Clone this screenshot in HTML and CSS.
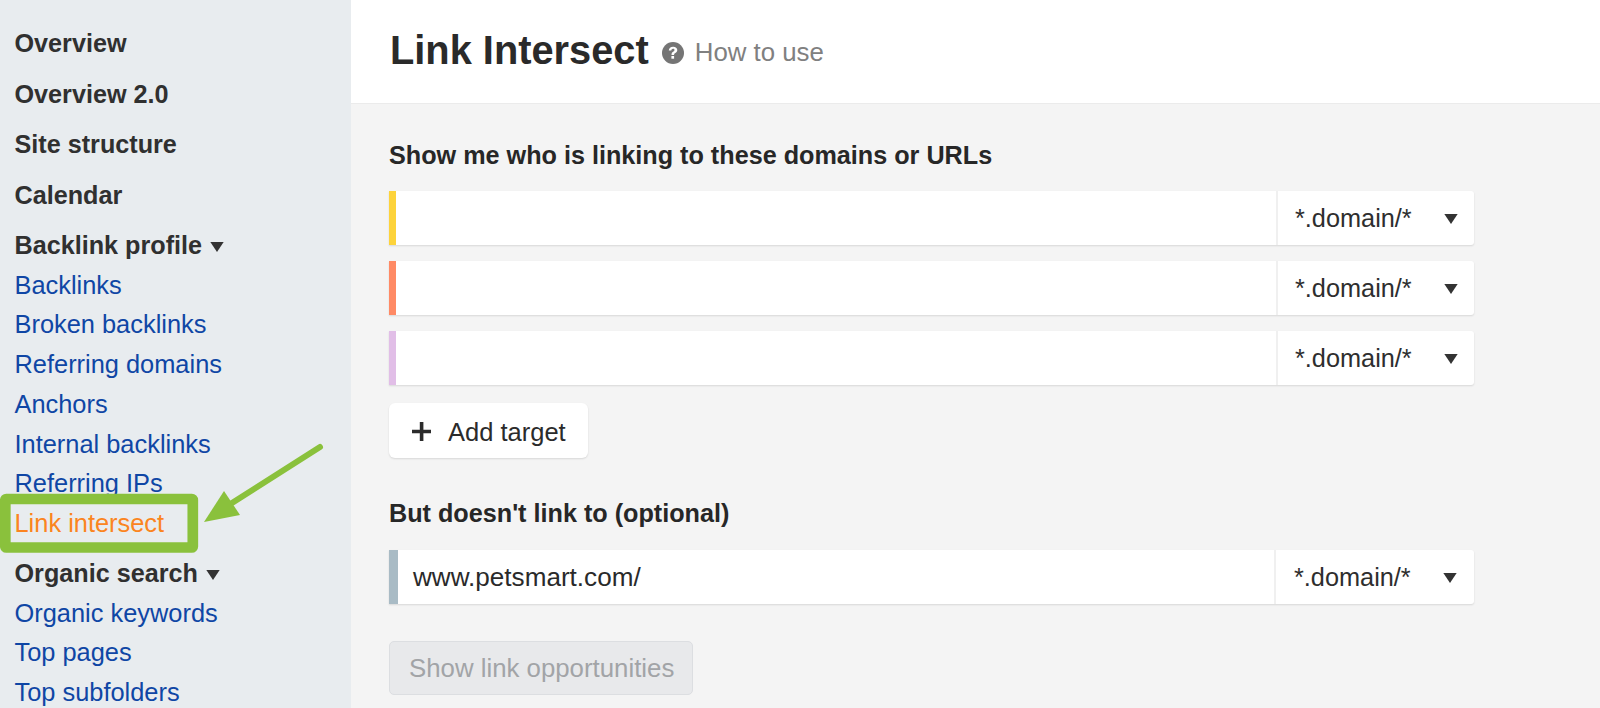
FILE: index.html
```html
<!DOCTYPE html>
<html lang="en">
<head>
<meta charset="utf-8">
<title>Link Intersect</title>
<link rel="stylesheet" href="styles.css">
</head>
<body>
<div class="page">
  <nav class="sidebar">
    <a class="head">Overview</a>
    <a class="head">Overview 2.0</a>
    <a class="head">Site structure</a>
    <a class="head">Calendar</a>
    <a class="head">Backlink profile <svg class="caret-s" viewBox="0 0 12 9"><path d="M0 0h12L6 9z"/></svg></a>
    <a class="link">Backlinks</a>
    <a class="link">Broken backlinks</a>
    <a class="link">Referring domains</a>
    <a class="link">Anchors</a>
    <a class="link">Internal backlinks</a>
    <a class="link">Referring IPs</a>
    <a class="link active">Link intersect</a>
    <a class="head">Organic search <svg class="caret-s" viewBox="0 0 12 9"><path d="M0 0h12L6 9z"/></svg></a>
    <a class="link">Organic keywords</a>
    <a class="link">Top pages</a>
    <a class="link">Top subfolders</a>
  </nav>
  <main class="main">
    <header class="topbar">
      <h1>Link Intersect</h1>
      <svg class="help" viewBox="0 0 22 22"><circle cx="11" cy="11" r="11" fill="#757575"/><path d="M6.800 8.600c.1-2.500 1.800-3.800 4.300-3.800s4.200 1.300 4.200 3.300c0 1.500-.8 2.300-2 3-1 .6-1.200 1-1.200 1.900H9.500c0-1.700.4-2.500 1.700-3.300.9-.6 1.300-1 1.300-1.600 0-.8-.6-1.300-1.500-1.300s-1.600.7-1.700 1.800z" fill="#fff"/><rect x="9.400" y="14" width="2.700" height="2.700" fill="#fff"/></svg>
      <span class="howto">How to use</span>
    </header>
    <section class="content">
      <h2>Show me who is linking to these domains or URLs</h2>
      <div class="row"><span class="bar yellow"></span><span class="value"></span><span class="mode">*.domain/*<svg class="caret" viewBox="0 0 12 9"><path d="M0 0h12L6 9z"/></svg></span></div>
      <div class="row"><span class="bar orange"></span><span class="value"></span><span class="mode">*.domain/*<svg class="caret" viewBox="0 0 12 9"><path d="M0 0h12L6 9z"/></svg></span></div>
      <div class="row"><span class="bar purple"></span><span class="value"></span><span class="mode">*.domain/*<svg class="caret" viewBox="0 0 12 9"><path d="M0 0h12L6 9z"/></svg></span></div>
      <button class="add"><svg class="plus" viewBox="0 0 19 19"><path d="M7.800 0h3.600v7.700h7.600v3.600h-7.600V19H7.800v-7.700H0V7.700h7.800z"/></svg>Add target</button>
      <h2 class="second">But doesn't link to (optional)</h2>
      <div class="row exclude"><span class="bar grey"></span><span class="value">www.petsmart.com/</span><span class="mode">*.domain/*<svg class="caret" viewBox="0 0 12 9"><path d="M0 0h12L6 9z"/></svg></span></div>
      <button class="submit">Show link opportunities</button>
    </section>
  </main>
</div>
<svg class="annotation" viewBox="0 0 340 120" aria-hidden="true">
  <rect x="5.300" y="59" width="187.500" height="48.500" rx="1" fill="none" stroke="#8ac13c" stroke-width="10.700"/>
  <path d="M320 7 232 63" fill="none" stroke="#8ac13c" stroke-width="6" stroke-linecap="round"/>
  <path d="M224 51 204 82 240 75z" fill="#8ac13c"/>
</svg>
</body>
</html>
```

FILE: styles.css
```css
* { box-sizing: border-box; }
html, body { margin: 0; height: 708px; overflow: hidden; }
body { font-family: "Liberation Sans", Arial, sans-serif; color: #2b2b2b; position: relative; }
.page { display: flex; height: 708px; }
.sidebar {
  width: 351px; flex: none; background: #e8ecef; padding: 18px 0 0 14.500px;
  display: flex; flex-direction: column; overflow: hidden;
}
.sidebar a { display: block; white-space: nowrap; }
.head { font-size: 25.200px; font-weight: 700; color: #303030; height: 50.500px; line-height: 50.500px; }
.link { font-size: 25.400px; color: #0f46a5; height: 39.800px; line-height: 39.800px; }
.link.active { color: #fb8420; }
.head + .link { margin-top: -5px; }
.link + .head { margin-top: 4px; }
.caret-s { width: 14px; height: 10px; fill: #333; margin-left: 1px; vertical-align: 2px; }
.main { flex: 1; background: #f4f4f4; min-width: 0; }
.topbar {
  height: 104px; background: #fff; border-bottom: 1px solid #ebebeb;
  display: flex; align-items: center; padding: 0 0 3px 39px;
}
h1 { margin: 0; font-size: 39.800px; font-weight: 700; color: #2a2a2a; }
.help { width: 22px; height: 22px; margin: 5px 0 0 13px; }
.howto { font-size: 25.800px; color: #808080; margin: 5px 0 0 11px; }
.content { padding: 33px 0 0 38px; width: 1123px; }
h2 { margin: 0 0 18px; font-size: 25.200px; font-weight: 700; line-height: 36px; color: #272727; }
.row {
  height: 54px; margin-bottom: 16px; background: #fff; display: flex; align-items: stretch;
  border-radius: 0 3px 3px 0; box-shadow: 0 1px 2px rgba(0,0,0,.12);
}
.bar { width: 7px; flex: none; }
.yellow { background: #fdd33b; }
.orange { background: #ff8a65; }
.purple { background: #e1bee7; }
.grey { background: #a9bbc5; width: 9px; }
.value { flex: 1; font-size: 26.100px; line-height: 54px; padding-left: 15px; color: #2a2a2a; }
.mode {
  width: 198px; flex: none; border-left: 2px solid #f0f0f0; font-size: 25.300px; line-height: 52px;
  padding-left: 17px; color: #2e2e2e; display: flex; align-items: center;
}
.exclude .mode { width: 200px; padding-left: 18px; }
.caret { width: 14px; height: 10px; fill: #333; margin-left: 32px; margin-top: 2px; }
button { font-family: inherit; display: flex; align-items: center; }
.add {
  width: 199px; height: 55px; margin-top: 18px; background: #fff; border: 0; border-radius: 6px;
  font-size: 25.500px; color: #2b2b2b; padding: 3px 0 0 23px; box-shadow: 0 1px 2px rgba(0,0,0,.12);
}
.plus { width: 19px; height: 19px; fill: #2b2b2b; margin: -2px 17px 0 0; }
h2.second { margin: 37px 0 19px; }
.submit {
  width: 304px; height: 54px; margin-top: 37px; background: #e8e9eb; border: 1px solid #dcdee1; border-radius: 5px;
  font-size: 25.800px; color: #a2a4a7; padding: 0 0 0 19px; white-space: nowrap;
}
.annotation { position: absolute; left: 0; top: 440px; width: 340px; height: 120px; overflow: visible; }
```
